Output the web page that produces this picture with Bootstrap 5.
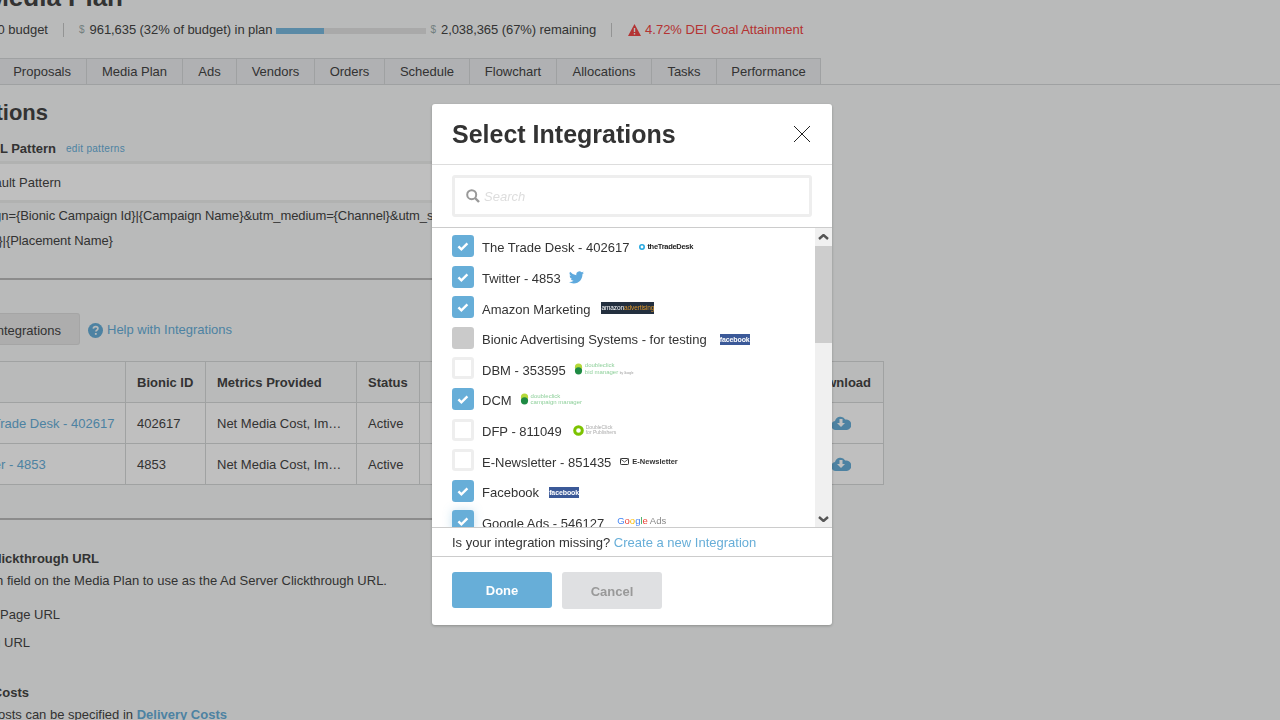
<!DOCTYPE html>
<html lang="en">
<head>
<meta charset="utf-8">
<title>Select Integrations</title>
<link href="https://cdn.jsdelivr.net/npm/bootstrap@5.3.0/dist/css/bootstrap.min.css" rel="stylesheet">
<style>
html,body{height:720px;overflow:hidden}
body{background:#f7f9f8;color:#444;font:13px/20px "Liberation Sans",Arial,sans-serif}
a{color:#67aed8;text-decoration:none}
.pull{display:flex;justify-content:flex-end;white-space:nowrap;flex:none}
.ttl{margin:-19px 0 0;height:33px;width:123px;font:700 26px/33px "Liberation Sans",sans-serif}
.stats{height:20px;margin-top:6px;white-space:nowrap}
.stats .pull{width:48px}
.sep{width:1px;height:14px;background:#c4c6c6;margin:0 15px}
.dol{color:#9aa;font-size:10px;margin-right:5px}
.num{letter-spacing:-.07px}
.meter{width:150px;height:6px;background:#e2e2e2;margin:2px 4px 0}
.meter i{display:block;width:32%;height:100%;background:#78b8de}
.warn{color:#f04545;margin-left:1px}
.tabs{margin-top:18px;height:27px;border-bottom:1px solid #d5d7d9}
.tabs .first{width:87px;height:27px;border:1px solid #d5d7d9;border-left:0;background:#ebecef;line-height:25px;padding-right:15px}
.tabi{height:27px;border:1px solid #d5d7d9;border-left:0;background:#ebecef;line-height:25px;color:#444;text-align:center}
.h2x{width:48px;margin-top:15px;height:26px;font:700 22px/26px "Liberation Sans",sans-serif}
.patt{margin-top:13px;height:20px}
.patt .pull{width:56px;font-weight:700}
.patt a{font-size:10px;letter-spacing:.3px;margin-left:10px}
.band{width:800px;height:42px;margin-top:2px;background:#fff;border-top:3px solid #eceeed;border-bottom:3px solid #eceeed}
.band .pull{width:61px;line-height:38px}
.tline{white-space:nowrap;height:25px;line-height:25px}
.tline span{letter-spacing:-.1px}
.rule{width:800px;height:2px;background:#bbb;border:0;margin:0;opacity:1}
.addbtn{width:80px;height:32px;line-height:33px;background:#e7e7e7;border:1px solid #ddd;border-left:0;border-radius:0 3px 3px 0;padding-right:18px}
.helpl{margin-left:8px;gap:4px;padding-top:2px}
.tbl{width:927px;margin:16px 0 0 -44px;table-layout:fixed;border-collapse:collapse;--bs-table-bg:transparent}
.tbl th,.tbl td{border:1px solid #d6d8d8;height:41px;padding:2px 11px 0;vertical-align:middle;white-space:nowrap;overflow:hidden;text-overflow:ellipsis;font-size:13px;color:#444}
.tbl tbody td{background:#fff}
.tbl td a{color:#67aed8}
.tbl td:first-child{padding-left:10px;padding-right:0}
.tbl th.dlh{padding:2px 12px 0 0;text-align:right;text-overflow:clip}
.tbl .dlc{padding:0 0 1px;text-align:center;line-height:0}
.lb{font-weight:700}
.t1{width:99px;margin-top:29px}
.t2{width:387px;margin-top:2px}
.t3{width:60px;margin-top:14px}
.t4{width:30px;margin-top:8px}
.t5{width:29px;margin-top:30px}
.t6{width:227px;margin-top:2px}
.t6 a{font-weight:700}

.modal-backdrop{--bs-backdrop-bg:#000;--bs-backdrop-opacity:.25}
.modal.dlg{display:block;overflow:hidden}
.dlg .modal-dialog{width:400px;max-width:400px;margin:104px 0 0 432px}
.dlg .modal-content{height:521px;border:0;border-radius:3px;box-shadow:0 1px 3px rgba(0,0,0,.25);color:#333}
.dlg .modal-header{height:61px;padding:0 20px;border-bottom:1px solid #ddd;border-radius:0;justify-content:space-between}
.dlg .modal-title{font:700 25px/32px "Liberation Sans",sans-serif;color:#333}
.xbtn{background:none;border:0;padding:0;width:18px;height:18px;margin-right:1px;line-height:0}
.srch{height:63px;padding:10px 20px;border-bottom:1px solid #ccc}
.srchbox{height:42px;border:3px solid #eee;border-radius:3px;padding-left:11px;gap:4px}
.srchbox input{border:0;outline:0;width:280px;padding:1px 0 0;font:italic 13px "Liberation Sans",sans-serif;background:none}
.srchbox input::placeholder{color:#ddd;opacity:1}
.lst{height:299px;overflow:hidden}
.rows{flex:1;padding:7px 0 0 20px}
.ro{height:30.6px;gap:8px;margin:0}
.ro .txt{line-height:22px;padding-top:2.400px;margin-right:2px;white-space:nowrap;color:#333}
.ro input{flex:none;width:22px;height:22px;margin:0;border-radius:3px;border:3px solid #eee;background-color:#fff;box-shadow:none}
.ro input:checked{background-color:#67aed8;border-color:#67aed8;background-size:14px;background-image:url("data:image/svg+xml,%3Csvg xmlns='http://www.w3.org/2000/svg' viewBox='0 0 14 14'%3E%3Cpath d='M2.4 7.4l3 3 6-6' fill='none' stroke='%23fff' stroke-width='2.4'/%3E%3C/svg%3E")}
.ro input:disabled{opacity:1;background:#cacaca;border-color:#cacaca}
.ro input.foc{box-shadow:0 0 10px rgba(103,174,216,.35)}
.sbar{width:17px;background:#f0f0f0;flex:none}
.sarr{height:18px;display:flex;align-items:center;justify-content:center}
.sthumb{height:97px;background:#cdcdcd}
.sgap{height:166px}
.miss{height:30px;padding:1px 20px 0;border-top:1px solid #ccc;border-bottom:1px solid #ccc;line-height:27px}
.dlg .modal-footer{padding:15px 20px;border:0;justify-content:flex-start;gap:10px;align-items:flex-start;display:flex}
.dlg .modal-footer>*{margin:0}
.bdone,.bcancel{width:100px;height:36px;border:0;border-radius:3px;font:700 13px "Liberation Sans",sans-serif;padding:0}
.bdone{background:#67aed8;color:#fff}
.bcancel{height:37px;background:#dfe0e2;color:#999;padding-top:1px}

.lg{display:inline-flex;align-items:center;align-self:flex-start;white-space:nowrap;font-family:"Liberation Sans",sans-serif;line-height:1;flex:none}
.lg-ttd{font-weight:700;font-size:7.500px;letter-spacing:-.3px;color:#222;gap:2px;margin-top:8px}
.lg-amz{width:53px;height:12px;background:#232f3e;font-size:6.500px;justify-content:center;margin-top:6px;margin-left:1px;color:#fff;letter-spacing:-.1px}
.lg-amz b{color:#d9942c;font-weight:400}
.lg-fb{width:30px;height:11px;background:#3b5998;color:#fff;font-weight:700;font-size:7px;justify-content:center;margin-top:7px;letter-spacing:-.1px}
.lg-fb.wide{margin-left:3px}
.lg-dc{gap:2px;margin-top:5px;margin-left:-2px}
.lg-dc span{display:block;font-size:6px;line-height:6.500px;color:#8fd09b}
.lg-dc span small{font-size:3px;color:#999}
.lg-dfp{margin-left:1px;margin-top:6px}
.lg-dfp span{font-size:5px;line-height:5px;color:#aaa}
.lg-nws{gap:3px;font-weight:700;font-size:7.500px;color:#333;margin-top:9px;margin-left:-1px}
.lg-gg{font-size:9.500px;margin-top:6px;margin-left:3px;gap:2px}
.lg-gg em{font-style:normal;color:#888}
.bird{align-self:flex-start;margin-top:5px;margin-left:-2px}
</style>
</head>
<body>
<div class="pull ttl">Media Plan</div>
<div class="stats d-flex align-items-center">
  <div class="pull">$ 3,000,000 budget</div>
  <span class="sep"></span>
  <span class="dol">$</span><span class="num">961,635 (32% of budget) in plan</span>
  <span class="meter"><i></i></span>
  <span class="dol">$</span><span class="num">2,038,365 (67%) remaining</span>
  <span class="sep"></span>
  <span class="warn d-flex align-items-center gap-1">
    <svg width="13" height="12" viewBox="0 0 13 12"><path d="M6.5 0L13 12H0z" fill="#f04545"/><path d="M5.8 4h1.4v4H5.8zM5.8 9h1.4v1.5H5.8z" fill="#f7f9f8"/></svg>
    4.72% DEI Goal Attainment</span>
</div>
<nav class="tabs d-flex">
  <div class="pull first"><a href="#" class="text-reset">Overview</a><a href="#" class="text-reset ms-4">Proposals</a></div>
  <a href="#" class="tabi" style="width:96px">Media Plan</a>
  <a href="#" class="tabi" style="width:54px">Ads</a>
  <a href="#" class="tabi" style="width:78px">Vendors</a>
  <a href="#" class="tabi" style="width:70px">Orders</a>
  <a href="#" class="tabi" style="width:85px">Schedule</a>
  <a href="#" class="tabi" style="width:87px">Flowchart</a>
  <a href="#" class="tabi" style="width:95px">Allocations</a>
  <a href="#" class="tabi" style="width:65px">Tasks</a>
  <a href="#" class="tabi" style="width:104px">Performance</a>
</nav>
<div class="pull h2x">Integrations</div>
<div class="patt d-flex align-items-center"><div class="pull">Default URL Pattern</div><a href="#">edit patterns</a></div>
<div class="band"><div class="pull">Default Pattern</div></div>
<div class="tline d-flex"><div class="pull" style="width:16px">?utm_campaign=</div><span>{Bionic Campaign Id}|{Campaign Name}&amp;utm_medium={Channel}&amp;utm_source={Vendor}</span></div>
<div class="tline d-flex"><div class="pull" style="width:6px">{Ad Name}|</div><span>{Placement Name}</span></div>
<hr class="rule" style="margin-top:25px">
<div class="d-flex align-items-center" style="margin-top:33px">
  <div class="pull addbtn">Add Integrations</div>
  <a href="#" class="d-flex align-items-center helpl">
    <svg width="15" height="15" viewBox="0 0 15 15"><circle cx="7.5" cy="7.5" r="7.5" fill="#67aed8"/><path d="M5.3 5.6c.2-1.4 1.2-2 2.4-2 1.300 0 2.200.8 2.200 1.900 0 1.600-2 1.600-2 3.100" fill="none" stroke="#f7f9f8" stroke-width="1.700"/><rect x="6.900" y="10" width="1.800" height="1.800" fill="#f7f9f8"/></svg>
    Help with Integrations</a>
</div>
<table class="tbl">
  <colgroup><col style="width:169px"><col style="width:80px"><col style="width:151px"><col style="width:63px"><col style="width:379px"><col style="width:85px"></colgroup>
  <thead><tr><th></th><th>Bionic ID</th><th>Metrics Provided</th><th>Status</th><th></th><th class="dlh">Download</th></tr></thead>
  <tbody>
    <tr><td><a href="#">The Trade Desk - 402617</a></td><td>402617</td><td>Net Media Cost, Impressions</td><td>Active</td><td></td>
      <td class="dlc"><svg width="20" height="15" viewBox="0 0 20 15"><path d="M5 15a4.500 4.500 0 0 1-1-8.900A5.500 5.500 0 0 1 14.200 4.500 3.800 3.800 0 0 1 16 15z" fill="#67aed8"/><path d="M8.500 4h3v4h2.500l-4 4-4-4h2.500z" fill="#fff"/></svg></td></tr>
    <tr><td><a href="#">Twitter - 4853</a></td><td>4853</td><td>Net Media Cost, Impressions</td><td>Active</td><td></td>
      <td class="dlc"><svg width="20" height="15" viewBox="0 0 20 15"><path d="M5 15a4.500 4.500 0 0 1-1-8.900A5.500 5.500 0 0 1 14.200 4.500 3.800 3.800 0 0 1 16 15z" fill="#67aed8"/><path d="M8.500 4h3v4h2.500l-4 4-4-4h2.500z" fill="#fff"/></svg></td></tr>
  </tbody>
</table>
<hr class="rule" style="margin-top:33px">
<div class="pull lb t1">Ad Server Clickthrough URL</div>
<div class="pull t2">Select which field on the Media Plan to use as the Ad Server Clickthrough URL.</div>
<div class="pull t3">Landing Page URL</div>
<div class="pull t4"><a href="#">Tracking</a>&nbsp;URL</div>
<div class="pull lb t5">Delivery Costs</div>
<div class="pull t6">Delivery costs can be specified in&nbsp;<a href="#">Delivery Costs</a></div>

<div class="modal-backdrop show"></div>
<div class="modal dlg" tabindex="-1" role="dialog">
 <div class="modal-dialog">
  <div class="modal-content">
   <div class="modal-header">
     <h5 class="modal-title">Select Integrations</h5>
     <button type="button" class="xbtn" aria-label="Close"><svg width="18" height="18" viewBox="0 0 18 18"><path d="M1 1l16 16M17 1L1 17" stroke="#222" stroke-width="1" fill="none"/></svg></button>
   </div>
   <div class="srch"><div class="srchbox d-flex align-items-center">
     <svg width="14" height="14" viewBox="0 0 14 14"><circle cx="5.700" cy="5.700" r="4.500" fill="none" stroke="#999" stroke-width="2"/><path d="M9 9l4 4" stroke="#999" stroke-width="2.400"/></svg>
     <input type="text" placeholder="Search" aria-label="Search">
   </div></div>
   <div class="lst d-flex">
     <div class="rows">
       <label class="ro d-flex"><input class="form-check-input" type="checkbox" checked><span class="txt">The Trade Desk - 402617</span>
         <span class="lg lg-ttd"><svg width="6" height="6" viewBox="0 0 6 6"><circle cx="3" cy="3" r="2.200" fill="none" stroke="#27a8e0" stroke-width="1.600"/></svg>theTradeDesk</span></label>
       <label class="ro d-flex"><input class="form-check-input" type="checkbox" checked><span class="txt">Twitter - 4853</span>
         <svg class="bird" width="15" height="13" viewBox="0 0 24 20"><path d="M24 2.400a9.800 9.800 0 0 1-2.800.8A4.900 4.900 0 0 0 23.300.5a9.800 9.800 0 0 1-3.100 1.200 4.900 4.900 0 0 0-8.400 4.500A14 14 0 0 1 1.700.9a4.900 4.900 0 0 0 1.500 6.600 4.900 4.900 0 0 1-2.200-.6v.1a4.900 4.900 0 0 0 3.900 4.800 4.900 4.900 0 0 1-2.200.1 4.900 4.900 0 0 0 4.600 3.400A9.900 9.900 0 0 1 0 17.300 14 14 0 0 0 7.500 19.500c9.100 0 14-7.500 14-14v-.6A10 10 0 0 0 24 2.400z" fill="#5ea9dd"/></svg></label>
       <label class="ro d-flex"><input class="form-check-input" type="checkbox" checked><span class="txt">Amazon Marketing</span>
         <span class="lg lg-amz">amazon<b>advertising</b></span></label>
       <label class="ro d-flex"><input class="form-check-input" type="checkbox" checked disabled><span class="txt">Bionic Advertising Systems - for testing</span>
         <span class="lg lg-fb wide">facebook</span></label>
       <label class="ro d-flex"><input class="form-check-input" type="checkbox"><span class="txt">DBM - 353595</span>
         <span class="lg lg-dc"><svg width="9" height="12" viewBox="0 0 10 12"><circle cx="5" cy="4" r="4" fill="#b5d93a"/><circle cx="5" cy="8" r="4" fill="#1e8a43"/></svg><span>doubleclick<br>bid manager <small>by Google</small></span></span></label>
       <label class="ro d-flex"><input class="form-check-input" type="checkbox" checked><span class="txt">DCM</span>
         <span class="lg lg-dc"><svg width="9" height="12" viewBox="0 0 10 12"><circle cx="5" cy="4" r="4" fill="#b5d93a"/><circle cx="5" cy="8" r="4" fill="#1e8a43"/></svg><span>doubleclick<br>campaign manager</span></span></label>
       <label class="ro d-flex"><input class="form-check-input" type="checkbox"><span class="txt">DFP - 811049</span>
         <span class="lg lg-dc lg-dfp"><svg width="11" height="11" viewBox="0 0 11 11"><circle cx="5.500" cy="5.500" r="3.800" fill="none" stroke="#7cc300" stroke-width="3"/></svg><span>DoubleClick<br>for Publishers</span></span></label>
       <label class="ro d-flex"><input class="form-check-input" type="checkbox"><span class="txt">E-Newsletter - 851435</span>
         <span class="lg lg-nws"><svg width="9" height="7" viewBox="0 0 9 7"><rect x=".5" y=".5" width="8" height="6" rx=".8" fill="none" stroke="#333"/><path d="M.5 1l4 3 4-3" fill="none" stroke="#333" stroke-width=".8"/></svg>E-Newsletter</span></label>
       <label class="ro d-flex"><input class="form-check-input" type="checkbox" checked><span class="txt">Facebook</span>
         <span class="lg lg-fb">facebook</span></label>
       <label class="ro d-flex"><input class="form-check-input foc" type="checkbox" checked><span class="txt">Google Ads - 546127</span>
         <span class="lg lg-gg"><span><span style="color:#4285f4">G</span><span style="color:#ea4335">o</span><span style="color:#fbbc05">o</span><span style="color:#4285f4">g</span><span style="color:#34a853">l</span><span style="color:#ea4335">e</span></span><em>Ads</em></span></label>
     </div>
     <div class="sbar" aria-hidden="true">
       <div class="sarr"><svg width="11" height="7" viewBox="0 0 11 7"><path d="M1 5l4.500-4L10 5" fill="none" stroke="#555" stroke-width="2.400"/></svg></div>
       <div class="sthumb"></div><div class="sgap"></div>
       <div class="sarr"><svg width="11" height="7" viewBox="0 0 11 7"><path d="M1 2l4.500 4L10 2" fill="none" stroke="#555" stroke-width="2.400"/></svg></div>
     </div>
   </div>
   <div class="miss">Is your integration missing? <a href="#">Create a new Integration</a></div>
   <div class="modal-footer">
     <button type="button" class="bdone">Done</button>
     <button type="button" class="bcancel">Cancel</button>
   </div>
  </div>
 </div>
</div>
<script src="https://cdn.jsdelivr.net/npm/bootstrap@5.3.0/dist/js/bootstrap.bundle.min.js"></script>
</body>
</html>
